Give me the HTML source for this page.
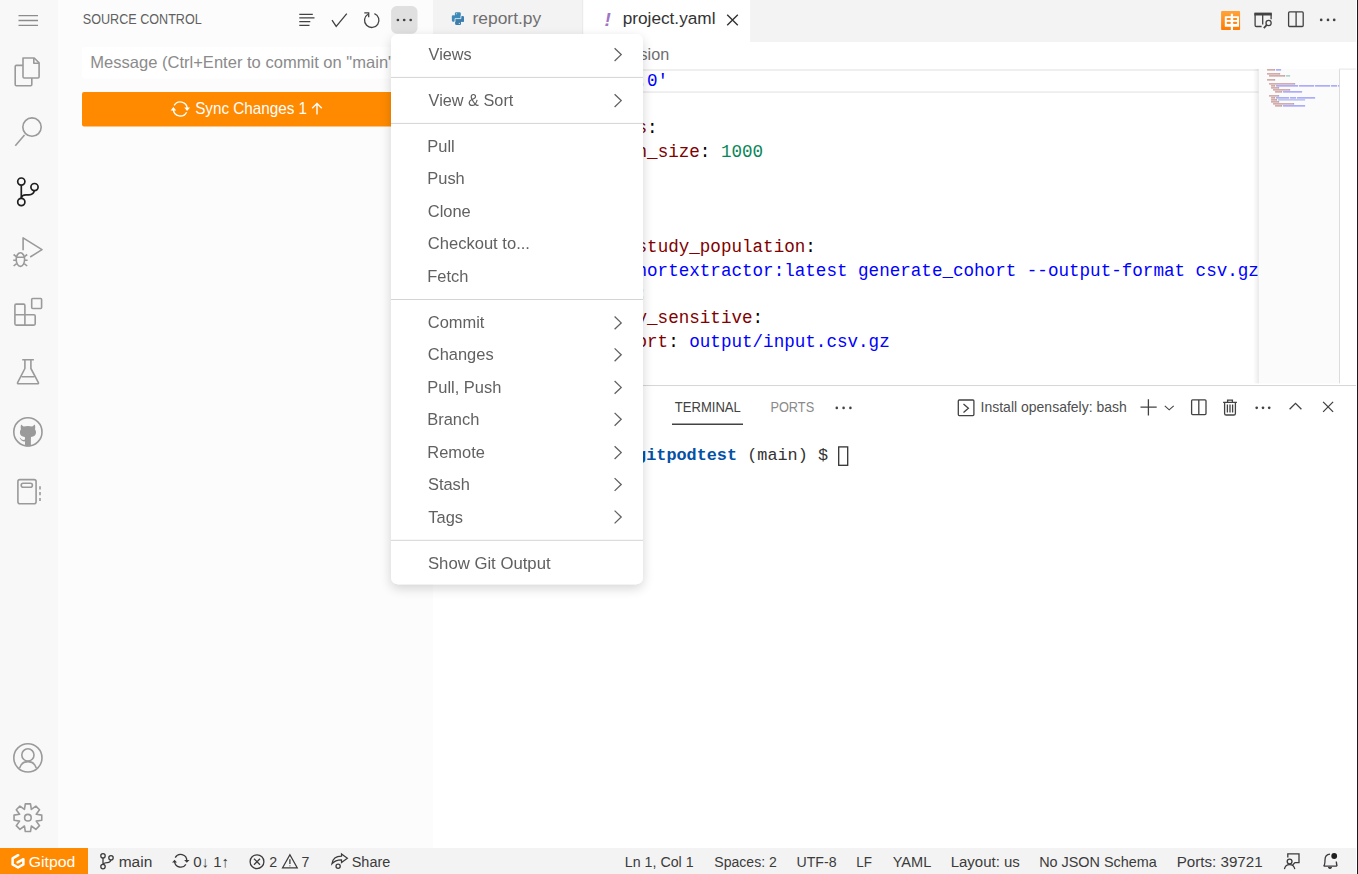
<!DOCTYPE html>
<html><head><meta charset="utf-8"><title>Source Control</title>
<style>
html,body{margin:0;padding:0;width:1358px;height:874px;overflow:hidden;background:#fff;}
svg{display:block;position:absolute;left:0;top:0;} #menu{will-change:transform;} text{white-space:pre;}
</style></head>
<body>
<svg width="1358" height="874" viewBox="0 0 1358 874" font-family='"Liberation Sans", sans-serif'>
<defs>
  
  <linearGradient id="mmsh" x1="0" x2="1" y1="0" y2="0">
    <stop offset="0" stop-color="#000" stop-opacity="0"/>
    <stop offset="1" stop-color="#000" stop-opacity="0.07"/>
  </linearGradient>
  <linearGradient id="og" x1="0" x2="0" y1="0" y2="1">
    <stop offset="0" stop-color="#ffa43a"/>
    <stop offset="1" stop-color="#ff7a00"/>
  </linearGradient>
</defs>

<!-- backgrounds -->
<rect x="0" y="0" width="1358" height="874" fill="#ffffff"/>
<rect x="0" y="0" width="58" height="848" fill="#f8f8f8"/>
<rect x="58" y="0" width="375" height="848" fill="#fcfcfc"/>
<rect x="433" y="0" width="923" height="42" fill="#f3f3f3"/>
<rect x="582.7" y="0" width="167.4" height="42" fill="#ffffff"/>
<rect x="582.2" y="0" width="1" height="41.7" fill="#e8e8e8"/>
<rect x="0" y="848" width="1356" height="26" fill="#f3f3f3"/>
<rect x="0" y="848" width="88" height="26" fill="#ff8a00"/>
<rect x="1357" y="0" width="1" height="874" fill="#1a1a1a"/>

<!-- ===== activity bar icons ===== -->
<g fill="none" stroke="#9a9a9a" stroke-width="1.6" stroke-linejoin="round">
  <!-- menu -->
  <path d="M18.5 15.6H38 M18.5 20.5H38 M18.5 25.4H38" stroke="#8c8c8c" stroke-width="1.3"/>
  <!-- files -->
  <path d="M23 58 H34.2 L39.1 62.9 V76.8 Q39.1 78 37.9 78 H24.2 Q23 78 23 76.8 Z"/>
  <path d="M33.8 58 V63.3 H39.1"/>
  <path d="M23 65.4 H16.4 Q15.2 65.4 15.2 66.6 V84.6 Q15.2 85.8 16.4 85.8 H30.6 Q31.8 85.8 31.8 84.6 V78"/>
  <!-- search -->
  <circle cx="32" cy="127.1" r="9.2"/>
  <path d="M24.5 135.1 L15.3 145.8"/>
  <!-- scm (active) -->
  <g stroke="#1f1f1f" stroke-width="1.7">
    <circle cx="21.3" cy="181.6" r="3.6"/>
    <circle cx="21.3" cy="202" r="3.6"/>
    <circle cx="34.5" cy="187.1" r="3.6"/>
    <path d="M21.3 185.2 V198.4"/>
    <path d="M34.3 190.7 Q33.6 194.8 29 194.8 H26 Q21.8 194.8 21.3 198"/>
  </g>
  <!-- debug -->
  <path d="M23.1 250.3 V237.9 L42 249.6 L30.2 257"/>
  <ellipse cx="20.4" cy="259.6" rx="4.2" ry="6.8"/>
  <path d="M16.6 257.2 H24.2 M13.6 254.5 L16.3 256.6 M27.2 254.5 L24.5 256.6 M13.2 260.2 H16 M27.6 260.2 H24.8 M13.6 266 L16.6 263.6 M27.2 266 L24.2 263.6"/>
  <!-- extensions -->
  <rect x="31.7" y="298.5" width="9.9" height="10" rx="1"/>
  <path d="M24.9 314.7 V305.4 Q24.9 304.1 23.6 304.1 H16.2 Q14.9 304.1 14.9 305.4 V323.8 Q14.9 325.1 16.2 325.1 H33.9 Q35.2 325.1 35.2 323.8 V316 Q35.2 314.7 33.9 314.7 H14.9 M24.9 314.7 V325.1"/>
  <!-- flask -->
  <path d="M22.2 359.8 H33.9 M24.9 359.8 V368.5 L17.6 382.6 Q17.2 383.8 18.4 383.8 H37.6 Q38.8 383.8 38.4 382.6 L30.9 368.5 V359.8 M21.7 376.7 H34.3"/>
  <!-- github -->
  <circle cx="27.9" cy="431.9" r="14.1"/>
  <!-- notebook -->
  <rect x="17.9" y="479.6" width="18.2" height="24.2" rx="2"/>
  <rect x="21.2" y="483.3" width="11.2" height="4" rx="2"/>
  <path d="M40 486.2 V489.4 M40 492.1 V495.3 M40 497.9 V501.1"/>
  <!-- account -->
  <circle cx="27.9" cy="757.9" r="14.1"/>
  <circle cx="27.9" cy="754.9" r="6.1"/>
  <path d="M19.6 768 Q21.5 761.6 27.9 761.6 Q34.3 761.6 36.3 768"/>
  <!-- gear -->
  <path d="M25.31,803.84 L30.49,803.84 L31.34,809.39 L35.87,806.07 L39.53,809.73 L36.21,814.26 L41.76,815.11 L41.76,820.29 L36.21,821.14 L39.53,825.67 L35.87,829.33 L31.34,826.01 L30.49,831.56 L25.31,831.56 L24.46,826.01 L19.93,829.33 L16.27,825.67 L19.59,821.14 L14.04,820.29 L14.04,815.11 L19.59,814.26 L16.27,809.73 L19.93,806.07 L24.46,809.39Z"/>
  <circle cx="27.9" cy="817.7" r="3.3"/>
</g>
<!-- github cat -->
<path fill="#9a9a9a" d="M21 424.6 L23.6 426.6 Q27.9 425.2 32.2 426.6 L34.9 424.6 Q35.6 427.6 35 429.2 Q36.2 430.8 36 432.8 Q35.6 436.6 31 437 Q30.9 437.6 30.9 439 V446 Q27.9 447 25 446 V441.2 Q21.8 442.4 19.6 437.6 L20.5 438 Q21.8 440.6 25 439.6 Q25 437.8 24.8 437 Q20.2 436.6 19.9 432.8 Q19.7 430.8 20.9 429.2 Q20.3 427.6 21 424.6 Z"/>

<!-- ===== sidebar ===== -->
<g fill="none" stroke="#424242" stroke-width="1.3" stroke-linecap="butt">
  <path d="M299.3 14.3 H312.8 M299.3 17.9 H314.5 M299.3 21.7 H310.3 M299.3 25.4 H309.5"/>
  <path d="M332 20.1 L336.2 26.3 L346.8 13.7"/>
  <path d="M374.4 13.6 A7.2 7.2 0 1 1 367.9 14.2"/>
  <path d="M364.3 12.9 H368.7 V17.3"/>
</g>
<rect x="391.1" y="6.1" width="26.4" height="27.6" rx="5.5" fill="#e0e0e0"/>
<g fill="#424242"><circle cx="397.9" cy="20" r="1.35"/><circle cx="404.2" cy="20" r="1.35"/><circle cx="410.7" cy="20" r="1.35"/></g>
<rect x="82" y="47.3" width="330" height="31.2" rx="2" fill="#ffffff"/>
<rect x="82" y="92" width="330" height="34.5" rx="2" fill="#ff8a00"/>
<g fill="none" stroke="#ffffff" stroke-width="1.4">
  <path d="M174.2 105.4 A7 7 0 0 1 187.2 108.4"/>
  <path d="M186.6 112.2 A7 7 0 0 1 173.4 109.6"/>
  <path d="M317 114.5 V103.6 M312.2 108.2 L317 103.4 L321.8 108.2"/>
</g>
<path d="M184.2 107.4 H190 L187.1 110.9 Z M170.6 110.6 H176.2 L173.4 107.1 Z" fill="#ffffff"/>
<!-- ===== tabs ===== -->
<g fill="#3f89b8">
  <rect x="454.9" y="12.2" width="5.9" height="6.6" rx="1.3"/>
  <rect x="451.9" y="15.4" width="8.9" height="3.4" rx="0.6"/>
  <rect x="451.9" y="15.4" width="3.2" height="6.4" rx="1.3"/>
</g>
<g fill="#3a7fae">
  <rect x="455.1" y="18.6" width="5.9" height="6.4" rx="1.3"/>
  <rect x="455.1" y="18.6" width="8.9" height="3.2" rx="0.6"/>
  <rect x="460.8" y="15.9" width="3.2" height="5.9" rx="1.3"/>
</g>
<path d="M460.9 15.6 V18.6 H455 V22" stroke="#f3f3f3" stroke-width="0.8" fill="none"/>
<circle cx="456.6" cy="13.8" r="0.55" fill="#f3f3f3"/><circle cx="459.3" cy="23.4" r="0.55" fill="#f3f3f3"/>
<text x="604.4" y="25.8" font-family='"Liberation Sans", sans-serif' font-size="19" font-weight="bold" font-style="italic" fill="#a074c4">!</text>
<path d="M727.2 14.8 L737.8 25.2 M737.8 14.8 L727.2 25.2" stroke="#333" stroke-width="1.4" fill="none"/>
<!-- tab bar actions -->
<rect x="1221.1" y="11.1" width="19" height="19" rx="0.8" fill="url(#og)"/>
<rect x="1224.8" y="16.2" width="14.2" height="10.6" rx="0.6" fill="#ffffff"/>
<rect x="1230.8" y="13.7" width="2.2" height="16.4" fill="#ffffff"/>
<g fill="#ff8a1a">
  <rect x="1226.6" y="18.1" width="4.2" height="1.9" rx="0.9"/>
  <rect x="1233" y="18.1" width="4.2" height="1.9" rx="0.9"/>
  <rect x="1226.6" y="21.7" width="4.2" height="2.2" rx="1"/>
  <rect x="1233" y="21.7" width="4.2" height="2.2" rx="1"/>
</g>
<g fill="none" stroke="#424242" stroke-width="1.3">
  <path d="M1271.1 19.3 V14 H1255.1 V25.3 Q1255.1 26.5 1256.3 26.5 H1261.6"/>
  <path d="M1262.7 15 V24.4"/>
  <circle cx="1268.6" cy="23" r="2.6"/>
  <path d="M1266.6 25.2 L1263.8 28.2" stroke-width="1.7"/>
  <rect x="1288.6" y="11.9" width="14.6" height="14.6" rx="1"/>
  <path d="M1296.1 12 V26.5"/>
</g>
<rect x="1254.4" y="12.6" width="17.3" height="2.9" fill="#424242"/>
<g fill="#424242"><circle cx="1321.2" cy="19.9" r="1.35"/><circle cx="1328" cy="19.9" r="1.35"/><circle cx="1334.2" cy="19.9" r="1.35"/></g>

<!-- ===== editor ===== -->
<text transform="translate(82.80 23.80) scale(0.8752 1)" font-family='"Liberation Sans", sans-serif' font-size="14.4" fill="#616161" font-weight="normal" font-style="normal">SOURCE CONTROL</text>
<text transform="translate(90.18 68.10) scale(1.0159 1)" font-family='"Liberation Sans", sans-serif' font-size="16.3" fill="#8b8b8b" font-weight="normal" font-style="normal">Message (Ctrl+Enter to commit on &quot;main&quot;)</text>
<text transform="translate(195.19 113.90) scale(0.9308 1)" font-family='"Liberation Sans", sans-serif' font-size="16.4" fill="#ffffff" font-weight="normal" font-style="normal">Sync Changes 1</text>
<text transform="translate(472.56 23.60) scale(1.0232 1)" font-family='"Liberation Sans", sans-serif' font-size="17" fill="#6f6f6f" font-weight="normal" font-style="normal">report.py</text>
<text transform="translate(622.67 23.90) scale(1.0138 1)" font-family='"Liberation Sans", sans-serif' font-size="17" fill="#333333" font-weight="normal" font-style="normal">project.yaml</text>
<text transform="translate(617.00 59.90) scale(1.0000 1)" font-family='"Liberation Sans", sans-serif' font-size="16.2" fill="#6f6f6f" font-weight="normal" font-style="normal">version</text>
<text transform="translate(674.84 412.10) scale(0.9193 1)" font-family='"Liberation Sans", sans-serif' font-size="14.2" fill="#424242" font-weight="normal" font-style="normal">TERMINAL</text>
<text transform="translate(770.38 412.10) scale(0.9000 1)" font-family='"Liberation Sans", sans-serif' font-size="14.2" fill="#8a8a8a" font-weight="normal" font-style="normal">PORTS</text>
<text transform="translate(980.54 411.70) scale(1.0154 1)" font-family='"Liberation Sans", sans-serif' font-size="13.8" fill="#4f4f4f" font-weight="normal" font-style="normal">Install opensafely: bash</text>
<text transform="translate(28.71 866.80) scale(1.0539 1)" font-family='"Liberation Sans", sans-serif' font-size="15" fill="#ffffff" font-weight="normal" font-style="normal">Gitpod</text>
<text transform="translate(118.67 866.80) scale(1.0335 1)" font-family='"Liberation Sans", sans-serif' font-size="15" fill="#3b3b3b" font-weight="normal" font-style="normal">main</text>
<text transform="translate(193.15 866.80) scale(1.0044 1)" font-family='"Liberation Sans", sans-serif' font-size="15" fill="#3b3b3b" font-weight="normal" font-style="normal">0↓ 1↑</text>
<text transform="translate(269.29 866.80) scale(0.9500 1)" font-family='"Liberation Sans", sans-serif' font-size="15" fill="#3b3b3b" font-weight="normal" font-style="normal">2</text>
<text transform="translate(301.59 866.80) scale(0.9500 1)" font-family='"Liberation Sans", sans-serif' font-size="15" fill="#3b3b3b" font-weight="normal" font-style="normal">7</text>
<text transform="translate(351.72 866.80) scale(0.9644 1)" font-family='"Liberation Sans", sans-serif' font-size="15" fill="#3b3b3b" font-weight="normal" font-style="normal">Share</text>
<text transform="translate(624.86 866.80) scale(0.9483 1)" font-family='"Liberation Sans", sans-serif' font-size="15" fill="#3b3b3b" font-weight="normal" font-style="normal">Ln 1, Col 1</text>
<text transform="translate(714.34 866.80) scale(0.9371 1)" font-family='"Liberation Sans", sans-serif' font-size="15" fill="#3b3b3b" font-weight="normal" font-style="normal">Spaces: 2</text>
<text transform="translate(796.41 866.80) scale(0.9437 1)" font-family='"Liberation Sans", sans-serif' font-size="15" fill="#3b3b3b" font-weight="normal" font-style="normal">UTF-8</text>
<text transform="translate(856.32 866.80) scale(0.8963 1)" font-family='"Liberation Sans", sans-serif' font-size="15" fill="#3b3b3b" font-weight="normal" font-style="normal">LF</text>
<text transform="translate(892.71 866.80) scale(0.9708 1)" font-family='"Liberation Sans", sans-serif' font-size="15" fill="#3b3b3b" font-weight="normal" font-style="normal">YAML</text>
<text transform="translate(950.70 866.80) scale(0.9991 1)" font-family='"Liberation Sans", sans-serif' font-size="15" fill="#3b3b3b" font-weight="normal" font-style="normal">Layout: us</text>
<text transform="translate(1039.15 866.80) scale(0.9596 1)" font-family='"Liberation Sans", sans-serif' font-size="15" fill="#3b3b3b" font-weight="normal" font-style="normal">No JSON Schema</text>
<text transform="translate(1176.69 866.80) scale(1.0113 1)" font-family='"Liberation Sans", sans-serif' font-size="15" fill="#3b3b3b" font-weight="normal" font-style="normal">Ports: 39721</text>
<rect x="433" y="69.1" width="825.7" height="1.8" fill="#eeeeee"/>
<rect x="433" y="91.2" width="825.7" height="1.8" fill="#eeeeee"/>
<g font-family='"Liberation Mono", monospace' font-size="17.58">
<text x="520.50" y="85.70" fill="#800000">version</text>
<text x="594.34" y="85.70" fill="#000000">: </text>
<text x="615.43" y="85.70" fill="#0000ff">'4.0'</text>
<text x="520.50" y="133.16" fill="#800000">expectations</text>
<text x="647.08" y="133.16" fill="#000000">:</text>
<text x="541.60" y="156.89" fill="#800000">population_size</text>
<text x="699.82" y="156.89" fill="#000000">: </text>
<text x="720.91" y="156.89" fill="#098658">1000</text>
<text x="520.50" y="204.35" fill="#800000">actions</text>
<text x="594.34" y="204.35" fill="#000000">:</text>
<text x="541.60" y="251.81" fill="#800000">generate_study_population</text>
<text x="805.30" y="251.81" fill="#000000">:</text>
<text x="562.69" y="275.54" fill="#800000">run</text>
<text x="594.34" y="275.54" fill="#000000">: </text>
<text x="615.43" y="275.54" fill="#0000ff">cohortextractor:latest generate_cohort --output-format csv.gz</text>
<text x="562.69" y="299.27" fill="#800000">outputs</text>
<text x="636.53" y="299.27" fill="#2f7fd6">:</text>
<text x="583.79" y="323.00" fill="#800000">highly_sensitive</text>
<text x="752.56" y="323.00" fill="#000000">:</text>
<text x="604.88" y="346.73" fill="#800000">cohort</text>
<text x="668.17" y="346.73" fill="#000000">: </text>
<text x="689.27" y="346.73" fill="#0000ff">output/input.csv.gz</text>
</g>
<!-- minimap -->
<rect x="1253" y="68.9" width="5.7" height="314.5" fill="url(#mmsh)"/>
<rect x="1258.7" y="68.9" width="80.6" height="314.5" fill="#fbfbfb"/>
<rect x="1257.8" y="68.9" width="1" height="314.5" fill="#000" opacity="0.045"/>
<rect x="1339" y="68.9" width="1" height="314.5" fill="#dcdcdc"/>
<rect x="1339" y="68.6" width="17" height="1" fill="#e6e6e6"/>
<g opacity="0.42"><rect x="1267.2" y="69.1" width="0.9" height="1.5" fill="#800000"/><rect x="1268.2" y="69.1" width="0.9" height="1.5" fill="#800000"/><rect x="1269.2" y="69.1" width="0.9" height="1.5" fill="#800000"/><rect x="1270.2" y="69.1" width="0.9" height="1.5" fill="#800000"/><rect x="1271.2" y="69.1" width="0.9" height="1.5" fill="#800000"/><rect x="1272.2" y="69.1" width="0.9" height="1.5" fill="#800000"/><rect x="1273.2" y="69.1" width="0.9" height="1.5" fill="#800000"/><rect x="1274.2" y="69.1" width="0.9" height="1.5" fill="#000000"/><rect x="1276.2" y="69.1" width="0.9" height="1.5" fill="#0000ff"/><rect x="1277.2" y="69.1" width="0.9" height="1.5" fill="#0000ff"/><rect x="1278.2" y="69.1" width="0.9" height="1.5" fill="#0000ff"/><rect x="1279.2" y="69.1" width="0.9" height="1.5" fill="#0000ff"/><rect x="1280.2" y="69.1" width="0.9" height="1.5" fill="#0000ff"/><rect x="1267.2" y="73.1" width="0.9" height="1.5" fill="#800000"/><rect x="1268.2" y="73.1" width="0.9" height="1.5" fill="#800000"/><rect x="1269.2" y="73.1" width="0.9" height="1.5" fill="#800000"/><rect x="1270.2" y="73.1" width="0.9" height="1.5" fill="#800000"/><rect x="1271.2" y="73.1" width="0.9" height="1.5" fill="#800000"/><rect x="1272.2" y="73.1" width="0.9" height="1.5" fill="#800000"/><rect x="1273.2" y="73.1" width="0.9" height="1.5" fill="#800000"/><rect x="1274.2" y="73.1" width="0.9" height="1.5" fill="#800000"/><rect x="1275.2" y="73.1" width="0.9" height="1.5" fill="#800000"/><rect x="1276.2" y="73.1" width="0.9" height="1.5" fill="#800000"/><rect x="1277.2" y="73.1" width="0.9" height="1.5" fill="#800000"/><rect x="1278.2" y="73.1" width="0.9" height="1.5" fill="#800000"/><rect x="1279.2" y="73.1" width="0.9" height="1.5" fill="#000000"/><rect x="1269.2" y="75.1" width="0.9" height="1.5" fill="#800000"/><rect x="1270.2" y="75.1" width="0.9" height="1.5" fill="#800000"/><rect x="1271.2" y="75.1" width="0.9" height="1.5" fill="#800000"/><rect x="1272.2" y="75.1" width="0.9" height="1.5" fill="#800000"/><rect x="1273.2" y="75.1" width="0.9" height="1.5" fill="#800000"/><rect x="1274.2" y="75.1" width="0.9" height="1.5" fill="#800000"/><rect x="1275.2" y="75.1" width="0.9" height="1.5" fill="#800000"/><rect x="1276.2" y="75.1" width="0.9" height="1.5" fill="#800000"/><rect x="1277.2" y="75.1" width="0.9" height="1.5" fill="#800000"/><rect x="1278.2" y="75.1" width="0.9" height="1.5" fill="#800000"/><rect x="1279.2" y="75.1" width="0.9" height="1.5" fill="#800000"/><rect x="1280.2" y="75.1" width="0.9" height="1.5" fill="#800000"/><rect x="1281.2" y="75.1" width="0.9" height="1.5" fill="#800000"/><rect x="1282.2" y="75.1" width="0.9" height="1.5" fill="#800000"/><rect x="1283.2" y="75.1" width="0.9" height="1.5" fill="#800000"/><rect x="1284.2" y="75.1" width="0.9" height="1.5" fill="#000000"/><rect x="1286.2" y="75.1" width="0.9" height="1.5" fill="#098658"/><rect x="1287.2" y="75.1" width="0.9" height="1.5" fill="#098658"/><rect x="1288.2" y="75.1" width="0.9" height="1.5" fill="#098658"/><rect x="1289.2" y="75.1" width="0.9" height="1.5" fill="#098658"/><rect x="1267.2" y="79.1" width="0.9" height="1.5" fill="#800000"/><rect x="1268.2" y="79.1" width="0.9" height="1.5" fill="#800000"/><rect x="1269.2" y="79.1" width="0.9" height="1.5" fill="#800000"/><rect x="1270.2" y="79.1" width="0.9" height="1.5" fill="#800000"/><rect x="1271.2" y="79.1" width="0.9" height="1.5" fill="#800000"/><rect x="1272.2" y="79.1" width="0.9" height="1.5" fill="#800000"/><rect x="1273.2" y="79.1" width="0.9" height="1.5" fill="#800000"/><rect x="1274.2" y="79.1" width="0.9" height="1.5" fill="#000000"/><rect x="1269.2" y="83.1" width="0.9" height="1.5" fill="#800000"/><rect x="1270.2" y="83.1" width="0.9" height="1.5" fill="#800000"/><rect x="1271.2" y="83.1" width="0.9" height="1.5" fill="#800000"/><rect x="1272.2" y="83.1" width="0.9" height="1.5" fill="#800000"/><rect x="1273.2" y="83.1" width="0.9" height="1.5" fill="#800000"/><rect x="1274.2" y="83.1" width="0.9" height="1.5" fill="#800000"/><rect x="1275.2" y="83.1" width="0.9" height="1.5" fill="#800000"/><rect x="1276.2" y="83.1" width="0.9" height="1.5" fill="#800000"/><rect x="1277.2" y="83.1" width="0.9" height="1.5" fill="#800000"/><rect x="1278.2" y="83.1" width="0.9" height="1.5" fill="#800000"/><rect x="1279.2" y="83.1" width="0.9" height="1.5" fill="#800000"/><rect x="1280.2" y="83.1" width="0.9" height="1.5" fill="#800000"/><rect x="1281.2" y="83.1" width="0.9" height="1.5" fill="#800000"/><rect x="1282.2" y="83.1" width="0.9" height="1.5" fill="#800000"/><rect x="1283.2" y="83.1" width="0.9" height="1.5" fill="#800000"/><rect x="1284.2" y="83.1" width="0.9" height="1.5" fill="#800000"/><rect x="1285.2" y="83.1" width="0.9" height="1.5" fill="#800000"/><rect x="1286.2" y="83.1" width="0.9" height="1.5" fill="#800000"/><rect x="1287.2" y="83.1" width="0.9" height="1.5" fill="#800000"/><rect x="1288.2" y="83.1" width="0.9" height="1.5" fill="#800000"/><rect x="1289.2" y="83.1" width="0.9" height="1.5" fill="#800000"/><rect x="1290.2" y="83.1" width="0.9" height="1.5" fill="#800000"/><rect x="1291.2" y="83.1" width="0.9" height="1.5" fill="#800000"/><rect x="1292.2" y="83.1" width="0.9" height="1.5" fill="#800000"/><rect x="1293.2" y="83.1" width="0.9" height="1.5" fill="#800000"/><rect x="1294.2" y="83.1" width="0.9" height="1.5" fill="#000000"/><rect x="1271.2" y="85.1" width="0.9" height="1.5" fill="#800000"/><rect x="1272.2" y="85.1" width="0.9" height="1.5" fill="#800000"/><rect x="1273.2" y="85.1" width="0.9" height="1.5" fill="#800000"/><rect x="1274.2" y="85.1" width="0.9" height="1.5" fill="#000000"/><rect x="1276.2" y="85.1" width="0.9" height="1.5" fill="#0000ff"/><rect x="1277.2" y="85.1" width="0.9" height="1.5" fill="#0000ff"/><rect x="1278.2" y="85.1" width="0.9" height="1.5" fill="#0000ff"/><rect x="1279.2" y="85.1" width="0.9" height="1.5" fill="#0000ff"/><rect x="1280.2" y="85.1" width="0.9" height="1.5" fill="#0000ff"/><rect x="1281.2" y="85.1" width="0.9" height="1.5" fill="#0000ff"/><rect x="1282.2" y="85.1" width="0.9" height="1.5" fill="#0000ff"/><rect x="1283.2" y="85.1" width="0.9" height="1.5" fill="#0000ff"/><rect x="1284.2" y="85.1" width="0.9" height="1.5" fill="#0000ff"/><rect x="1285.2" y="85.1" width="0.9" height="1.5" fill="#0000ff"/><rect x="1286.2" y="85.1" width="0.9" height="1.5" fill="#0000ff"/><rect x="1287.2" y="85.1" width="0.9" height="1.5" fill="#0000ff"/><rect x="1288.2" y="85.1" width="0.9" height="1.5" fill="#0000ff"/><rect x="1289.2" y="85.1" width="0.9" height="1.5" fill="#0000ff"/><rect x="1290.2" y="85.1" width="0.9" height="1.5" fill="#0000ff"/><rect x="1291.2" y="85.1" width="0.9" height="1.5" fill="#0000ff"/><rect x="1292.2" y="85.1" width="0.9" height="1.5" fill="#0000ff"/><rect x="1293.2" y="85.1" width="0.9" height="1.5" fill="#0000ff"/><rect x="1294.2" y="85.1" width="0.9" height="1.5" fill="#0000ff"/><rect x="1295.2" y="85.1" width="0.9" height="1.5" fill="#0000ff"/><rect x="1296.2" y="85.1" width="0.9" height="1.5" fill="#0000ff"/><rect x="1297.2" y="85.1" width="0.9" height="1.5" fill="#0000ff"/><rect x="1299.2" y="85.1" width="0.9" height="1.5" fill="#0000ff"/><rect x="1300.2" y="85.1" width="0.9" height="1.5" fill="#0000ff"/><rect x="1301.2" y="85.1" width="0.9" height="1.5" fill="#0000ff"/><rect x="1302.2" y="85.1" width="0.9" height="1.5" fill="#0000ff"/><rect x="1303.2" y="85.1" width="0.9" height="1.5" fill="#0000ff"/><rect x="1304.2" y="85.1" width="0.9" height="1.5" fill="#0000ff"/><rect x="1305.2" y="85.1" width="0.9" height="1.5" fill="#0000ff"/><rect x="1306.2" y="85.1" width="0.9" height="1.5" fill="#0000ff"/><rect x="1307.2" y="85.1" width="0.9" height="1.5" fill="#0000ff"/><rect x="1308.2" y="85.1" width="0.9" height="1.5" fill="#0000ff"/><rect x="1309.2" y="85.1" width="0.9" height="1.5" fill="#0000ff"/><rect x="1310.2" y="85.1" width="0.9" height="1.5" fill="#0000ff"/><rect x="1311.2" y="85.1" width="0.9" height="1.5" fill="#0000ff"/><rect x="1312.2" y="85.1" width="0.9" height="1.5" fill="#0000ff"/><rect x="1313.2" y="85.1" width="0.9" height="1.5" fill="#0000ff"/><rect x="1315.2" y="85.1" width="0.9" height="1.5" fill="#0000ff"/><rect x="1316.2" y="85.1" width="0.9" height="1.5" fill="#0000ff"/><rect x="1317.2" y="85.1" width="0.9" height="1.5" fill="#0000ff"/><rect x="1318.2" y="85.1" width="0.9" height="1.5" fill="#0000ff"/><rect x="1319.2" y="85.1" width="0.9" height="1.5" fill="#0000ff"/><rect x="1320.2" y="85.1" width="0.9" height="1.5" fill="#0000ff"/><rect x="1321.2" y="85.1" width="0.9" height="1.5" fill="#0000ff"/><rect x="1322.2" y="85.1" width="0.9" height="1.5" fill="#0000ff"/><rect x="1323.2" y="85.1" width="0.9" height="1.5" fill="#0000ff"/><rect x="1324.2" y="85.1" width="0.9" height="1.5" fill="#0000ff"/><rect x="1325.2" y="85.1" width="0.9" height="1.5" fill="#0000ff"/><rect x="1326.2" y="85.1" width="0.9" height="1.5" fill="#0000ff"/><rect x="1327.2" y="85.1" width="0.9" height="1.5" fill="#0000ff"/><rect x="1328.2" y="85.1" width="0.9" height="1.5" fill="#0000ff"/><rect x="1329.2" y="85.1" width="0.9" height="1.5" fill="#0000ff"/><rect x="1331.2" y="85.1" width="0.9" height="1.5" fill="#0000ff"/><rect x="1332.2" y="85.1" width="0.9" height="1.5" fill="#0000ff"/><rect x="1333.2" y="85.1" width="0.9" height="1.5" fill="#0000ff"/><rect x="1334.2" y="85.1" width="0.9" height="1.5" fill="#0000ff"/><rect x="1335.2" y="85.1" width="0.9" height="1.5" fill="#0000ff"/><rect x="1336.2" y="85.1" width="0.9" height="1.5" fill="#0000ff"/><rect x="1338.2" y="85.1" width="0.9" height="1.5" fill="#0000ff"/><rect x="1271.2" y="87.1" width="0.9" height="1.5" fill="#800000"/><rect x="1272.2" y="87.1" width="0.9" height="1.5" fill="#800000"/><rect x="1273.2" y="87.1" width="0.9" height="1.5" fill="#800000"/><rect x="1274.2" y="87.1" width="0.9" height="1.5" fill="#800000"/><rect x="1275.2" y="87.1" width="0.9" height="1.5" fill="#800000"/><rect x="1276.2" y="87.1" width="0.9" height="1.5" fill="#800000"/><rect x="1277.2" y="87.1" width="0.9" height="1.5" fill="#800000"/><rect x="1278.2" y="87.1" width="0.9" height="1.5" fill="#000000"/><rect x="1273.2" y="89.1" width="0.9" height="1.5" fill="#800000"/><rect x="1274.2" y="89.1" width="0.9" height="1.5" fill="#800000"/><rect x="1275.2" y="89.1" width="0.9" height="1.5" fill="#800000"/><rect x="1276.2" y="89.1" width="0.9" height="1.5" fill="#800000"/><rect x="1277.2" y="89.1" width="0.9" height="1.5" fill="#800000"/><rect x="1278.2" y="89.1" width="0.9" height="1.5" fill="#800000"/><rect x="1279.2" y="89.1" width="0.9" height="1.5" fill="#800000"/><rect x="1280.2" y="89.1" width="0.9" height="1.5" fill="#800000"/><rect x="1281.2" y="89.1" width="0.9" height="1.5" fill="#800000"/><rect x="1282.2" y="89.1" width="0.9" height="1.5" fill="#800000"/><rect x="1283.2" y="89.1" width="0.9" height="1.5" fill="#800000"/><rect x="1284.2" y="89.1" width="0.9" height="1.5" fill="#800000"/><rect x="1285.2" y="89.1" width="0.9" height="1.5" fill="#800000"/><rect x="1286.2" y="89.1" width="0.9" height="1.5" fill="#800000"/><rect x="1287.2" y="89.1" width="0.9" height="1.5" fill="#800000"/><rect x="1288.2" y="89.1" width="0.9" height="1.5" fill="#800000"/><rect x="1289.2" y="89.1" width="0.9" height="1.5" fill="#000000"/><rect x="1275.2" y="91.1" width="0.9" height="1.5" fill="#800000"/><rect x="1276.2" y="91.1" width="0.9" height="1.5" fill="#800000"/><rect x="1277.2" y="91.1" width="0.9" height="1.5" fill="#800000"/><rect x="1278.2" y="91.1" width="0.9" height="1.5" fill="#800000"/><rect x="1279.2" y="91.1" width="0.9" height="1.5" fill="#800000"/><rect x="1280.2" y="91.1" width="0.9" height="1.5" fill="#800000"/><rect x="1281.2" y="91.1" width="0.9" height="1.5" fill="#000000"/><rect x="1283.2" y="91.1" width="0.9" height="1.5" fill="#0000ff"/><rect x="1284.2" y="91.1" width="0.9" height="1.5" fill="#0000ff"/><rect x="1285.2" y="91.1" width="0.9" height="1.5" fill="#0000ff"/><rect x="1286.2" y="91.1" width="0.9" height="1.5" fill="#0000ff"/><rect x="1287.2" y="91.1" width="0.9" height="1.5" fill="#0000ff"/><rect x="1288.2" y="91.1" width="0.9" height="1.5" fill="#0000ff"/><rect x="1289.2" y="91.1" width="0.9" height="1.5" fill="#0000ff"/><rect x="1290.2" y="91.1" width="0.9" height="1.5" fill="#0000ff"/><rect x="1291.2" y="91.1" width="0.9" height="1.5" fill="#0000ff"/><rect x="1292.2" y="91.1" width="0.9" height="1.5" fill="#0000ff"/><rect x="1293.2" y="91.1" width="0.9" height="1.5" fill="#0000ff"/><rect x="1294.2" y="91.1" width="0.9" height="1.5" fill="#0000ff"/><rect x="1295.2" y="91.1" width="0.9" height="1.5" fill="#0000ff"/><rect x="1296.2" y="91.1" width="0.9" height="1.5" fill="#0000ff"/><rect x="1297.2" y="91.1" width="0.9" height="1.5" fill="#0000ff"/><rect x="1298.2" y="91.1" width="0.9" height="1.5" fill="#0000ff"/><rect x="1299.2" y="91.1" width="0.9" height="1.5" fill="#0000ff"/><rect x="1300.2" y="91.1" width="0.9" height="1.5" fill="#0000ff"/><rect x="1301.2" y="91.1" width="0.9" height="1.5" fill="#0000ff"/><rect x="1269.2" y="95.1" width="0.9" height="1.5" fill="#800000"/><rect x="1270.2" y="95.1" width="0.9" height="1.5" fill="#800000"/><rect x="1271.2" y="95.1" width="0.9" height="1.5" fill="#800000"/><rect x="1272.2" y="95.1" width="0.9" height="1.5" fill="#800000"/><rect x="1273.2" y="95.1" width="0.9" height="1.5" fill="#800000"/><rect x="1274.2" y="95.1" width="0.9" height="1.5" fill="#800000"/><rect x="1275.2" y="95.1" width="0.9" height="1.5" fill="#800000"/><rect x="1276.2" y="95.1" width="0.9" height="1.5" fill="#800000"/><rect x="1277.2" y="95.1" width="0.9" height="1.5" fill="#800000"/><rect x="1278.2" y="95.1" width="0.9" height="1.5" fill="#000000"/><rect x="1271.2" y="97.1" width="0.9" height="1.5" fill="#800000"/><rect x="1272.2" y="97.1" width="0.9" height="1.5" fill="#800000"/><rect x="1273.2" y="97.1" width="0.9" height="1.5" fill="#800000"/><rect x="1274.2" y="97.1" width="0.9" height="1.5" fill="#000000"/><rect x="1276.2" y="97.1" width="0.9" height="1.5" fill="#0000ff"/><rect x="1277.2" y="97.1" width="0.9" height="1.5" fill="#0000ff"/><rect x="1278.2" y="97.1" width="0.9" height="1.5" fill="#0000ff"/><rect x="1279.2" y="97.1" width="0.9" height="1.5" fill="#0000ff"/><rect x="1280.2" y="97.1" width="0.9" height="1.5" fill="#0000ff"/><rect x="1281.2" y="97.1" width="0.9" height="1.5" fill="#0000ff"/><rect x="1282.2" y="97.1" width="0.9" height="1.5" fill="#0000ff"/><rect x="1283.2" y="97.1" width="0.9" height="1.5" fill="#0000ff"/><rect x="1284.2" y="97.1" width="0.9" height="1.5" fill="#0000ff"/><rect x="1285.2" y="97.1" width="0.9" height="1.5" fill="#0000ff"/><rect x="1286.2" y="97.1" width="0.9" height="1.5" fill="#0000ff"/><rect x="1287.2" y="97.1" width="0.9" height="1.5" fill="#0000ff"/><rect x="1288.2" y="97.1" width="0.9" height="1.5" fill="#0000ff"/><rect x="1290.2" y="97.1" width="0.9" height="1.5" fill="#0000ff"/><rect x="1291.2" y="97.1" width="0.9" height="1.5" fill="#0000ff"/><rect x="1292.2" y="97.1" width="0.9" height="1.5" fill="#0000ff"/><rect x="1293.2" y="97.1" width="0.9" height="1.5" fill="#0000ff"/><rect x="1294.2" y="97.1" width="0.9" height="1.5" fill="#0000ff"/><rect x="1295.2" y="97.1" width="0.9" height="1.5" fill="#0000ff"/><rect x="1297.2" y="97.1" width="0.9" height="1.5" fill="#0000ff"/><rect x="1298.2" y="97.1" width="0.9" height="1.5" fill="#0000ff"/><rect x="1299.2" y="97.1" width="0.9" height="1.5" fill="#0000ff"/><rect x="1300.2" y="97.1" width="0.9" height="1.5" fill="#0000ff"/><rect x="1301.2" y="97.1" width="0.9" height="1.5" fill="#0000ff"/><rect x="1302.2" y="97.1" width="0.9" height="1.5" fill="#0000ff"/><rect x="1303.2" y="97.1" width="0.9" height="1.5" fill="#0000ff"/><rect x="1304.2" y="97.1" width="0.9" height="1.5" fill="#0000ff"/><rect x="1305.2" y="97.1" width="0.9" height="1.5" fill="#0000ff"/><rect x="1306.2" y="97.1" width="0.9" height="1.5" fill="#0000ff"/><rect x="1307.2" y="97.1" width="0.9" height="1.5" fill="#0000ff"/><rect x="1308.2" y="97.1" width="0.9" height="1.5" fill="#0000ff"/><rect x="1309.2" y="97.1" width="0.9" height="1.5" fill="#0000ff"/><rect x="1310.2" y="97.1" width="0.9" height="1.5" fill="#0000ff"/><rect x="1311.2" y="97.1" width="0.9" height="1.5" fill="#0000ff"/><rect x="1312.2" y="97.1" width="0.9" height="1.5" fill="#0000ff"/><rect x="1313.2" y="97.1" width="0.9" height="1.5" fill="#0000ff"/><rect x="1314.2" y="97.1" width="0.9" height="1.5" fill="#0000ff"/><rect x="1271.2" y="99.1" width="0.9" height="1.5" fill="#800000"/><rect x="1272.2" y="99.1" width="0.9" height="1.5" fill="#800000"/><rect x="1273.2" y="99.1" width="0.9" height="1.5" fill="#800000"/><rect x="1274.2" y="99.1" width="0.9" height="1.5" fill="#800000"/><rect x="1275.2" y="99.1" width="0.9" height="1.5" fill="#800000"/><rect x="1276.2" y="99.1" width="0.9" height="1.5" fill="#000000"/><rect x="1278.2" y="99.1" width="0.9" height="1.5" fill="#3a5bd0"/><rect x="1279.2" y="99.1" width="0.9" height="1.5" fill="#3a5bd0"/><rect x="1280.2" y="99.1" width="0.9" height="1.5" fill="#3a5bd0"/><rect x="1281.2" y="99.1" width="0.9" height="1.5" fill="#3a5bd0"/><rect x="1282.2" y="99.1" width="0.9" height="1.5" fill="#3a5bd0"/><rect x="1283.2" y="99.1" width="0.9" height="1.5" fill="#3a5bd0"/><rect x="1284.2" y="99.1" width="0.9" height="1.5" fill="#3a5bd0"/><rect x="1285.2" y="99.1" width="0.9" height="1.5" fill="#3a5bd0"/><rect x="1286.2" y="99.1" width="0.9" height="1.5" fill="#3a5bd0"/><rect x="1287.2" y="99.1" width="0.9" height="1.5" fill="#3a5bd0"/><rect x="1288.2" y="99.1" width="0.9" height="1.5" fill="#3a5bd0"/><rect x="1289.2" y="99.1" width="0.9" height="1.5" fill="#3a5bd0"/><rect x="1290.2" y="99.1" width="0.9" height="1.5" fill="#3a5bd0"/><rect x="1291.2" y="99.1" width="0.9" height="1.5" fill="#3a5bd0"/><rect x="1292.2" y="99.1" width="0.9" height="1.5" fill="#3a5bd0"/><rect x="1293.2" y="99.1" width="0.9" height="1.5" fill="#3a5bd0"/><rect x="1294.2" y="99.1" width="0.9" height="1.5" fill="#3a5bd0"/><rect x="1295.2" y="99.1" width="0.9" height="1.5" fill="#3a5bd0"/><rect x="1296.2" y="99.1" width="0.9" height="1.5" fill="#3a5bd0"/><rect x="1297.2" y="99.1" width="0.9" height="1.5" fill="#3a5bd0"/><rect x="1298.2" y="99.1" width="0.9" height="1.5" fill="#3a5bd0"/><rect x="1299.2" y="99.1" width="0.9" height="1.5" fill="#3a5bd0"/><rect x="1300.2" y="99.1" width="0.9" height="1.5" fill="#3a5bd0"/><rect x="1301.2" y="99.1" width="0.9" height="1.5" fill="#3a5bd0"/><rect x="1302.2" y="99.1" width="0.9" height="1.5" fill="#3a5bd0"/><rect x="1303.2" y="99.1" width="0.9" height="1.5" fill="#3a5bd0"/><rect x="1304.2" y="99.1" width="0.9" height="1.5" fill="#3a5bd0"/><rect x="1271.2" y="101.1" width="0.9" height="1.5" fill="#800000"/><rect x="1272.2" y="101.1" width="0.9" height="1.5" fill="#800000"/><rect x="1273.2" y="101.1" width="0.9" height="1.5" fill="#800000"/><rect x="1274.2" y="101.1" width="0.9" height="1.5" fill="#800000"/><rect x="1275.2" y="101.1" width="0.9" height="1.5" fill="#800000"/><rect x="1276.2" y="101.1" width="0.9" height="1.5" fill="#800000"/><rect x="1277.2" y="101.1" width="0.9" height="1.5" fill="#800000"/><rect x="1278.2" y="101.1" width="0.9" height="1.5" fill="#000000"/><rect x="1273.2" y="103.1" width="0.9" height="1.5" fill="#800000"/><rect x="1274.2" y="103.1" width="0.9" height="1.5" fill="#800000"/><rect x="1275.2" y="103.1" width="0.9" height="1.5" fill="#800000"/><rect x="1276.2" y="103.1" width="0.9" height="1.5" fill="#800000"/><rect x="1277.2" y="103.1" width="0.9" height="1.5" fill="#800000"/><rect x="1278.2" y="103.1" width="0.9" height="1.5" fill="#800000"/><rect x="1279.2" y="103.1" width="0.9" height="1.5" fill="#800000"/><rect x="1280.2" y="103.1" width="0.9" height="1.5" fill="#800000"/><rect x="1281.2" y="103.1" width="0.9" height="1.5" fill="#800000"/><rect x="1282.2" y="103.1" width="0.9" height="1.5" fill="#800000"/><rect x="1283.2" y="103.1" width="0.9" height="1.5" fill="#800000"/><rect x="1284.2" y="103.1" width="0.9" height="1.5" fill="#800000"/><rect x="1285.2" y="103.1" width="0.9" height="1.5" fill="#800000"/><rect x="1286.2" y="103.1" width="0.9" height="1.5" fill="#800000"/><rect x="1287.2" y="103.1" width="0.9" height="1.5" fill="#800000"/><rect x="1288.2" y="103.1" width="0.9" height="1.5" fill="#800000"/><rect x="1289.2" y="103.1" width="0.9" height="1.5" fill="#800000"/><rect x="1290.2" y="103.1" width="0.9" height="1.5" fill="#800000"/><rect x="1291.2" y="103.1" width="0.9" height="1.5" fill="#800000"/><rect x="1292.2" y="103.1" width="0.9" height="1.5" fill="#800000"/><rect x="1293.2" y="103.1" width="0.9" height="1.5" fill="#000000"/><rect x="1275.2" y="105.1" width="0.9" height="1.5" fill="#800000"/><rect x="1276.2" y="105.1" width="0.9" height="1.5" fill="#800000"/><rect x="1277.2" y="105.1" width="0.9" height="1.5" fill="#800000"/><rect x="1278.2" y="105.1" width="0.9" height="1.5" fill="#800000"/><rect x="1279.2" y="105.1" width="0.9" height="1.5" fill="#800000"/><rect x="1280.2" y="105.1" width="0.9" height="1.5" fill="#800000"/><rect x="1281.2" y="105.1" width="0.9" height="1.5" fill="#000000"/><rect x="1283.2" y="105.1" width="0.9" height="1.5" fill="#0000ff"/><rect x="1284.2" y="105.1" width="0.9" height="1.5" fill="#0000ff"/><rect x="1285.2" y="105.1" width="0.9" height="1.5" fill="#0000ff"/><rect x="1286.2" y="105.1" width="0.9" height="1.5" fill="#0000ff"/><rect x="1287.2" y="105.1" width="0.9" height="1.5" fill="#0000ff"/><rect x="1288.2" y="105.1" width="0.9" height="1.5" fill="#0000ff"/><rect x="1289.2" y="105.1" width="0.9" height="1.5" fill="#0000ff"/><rect x="1290.2" y="105.1" width="0.9" height="1.5" fill="#0000ff"/><rect x="1291.2" y="105.1" width="0.9" height="1.5" fill="#0000ff"/><rect x="1292.2" y="105.1" width="0.9" height="1.5" fill="#0000ff"/><rect x="1293.2" y="105.1" width="0.9" height="1.5" fill="#0000ff"/><rect x="1294.2" y="105.1" width="0.9" height="1.5" fill="#0000ff"/><rect x="1295.2" y="105.1" width="0.9" height="1.5" fill="#0000ff"/><rect x="1296.2" y="105.1" width="0.9" height="1.5" fill="#0000ff"/><rect x="1297.2" y="105.1" width="0.9" height="1.5" fill="#0000ff"/><rect x="1298.2" y="105.1" width="0.9" height="1.5" fill="#0000ff"/><rect x="1299.2" y="105.1" width="0.9" height="1.5" fill="#0000ff"/><rect x="1300.2" y="105.1" width="0.9" height="1.5" fill="#0000ff"/><rect x="1301.2" y="105.1" width="0.9" height="1.5" fill="#0000ff"/><rect x="1302.2" y="105.1" width="0.9" height="1.5" fill="#0000ff"/><rect x="1303.2" y="105.1" width="0.9" height="1.5" fill="#0000ff"/><rect x="1304.2" y="105.1" width="0.9" height="1.5" fill="#0000ff"/></g>

<!-- ===== panel ===== -->
<rect x="433" y="385" width="923" height="1" fill="#d6d6d6"/>
<rect x="672" y="423.5" width="71" height="1.5" fill="#424242"/>
<g fill="#424242"><circle cx="836.8" cy="407.9" r="1.3"/><circle cx="843.6" cy="407.9" r="1.3"/><circle cx="850.4" cy="407.9" r="1.3"/></g>
<g fill="none" stroke="#424242" stroke-width="1.3">
  <rect x="958.3" y="400" width="15.6" height="15.6" rx="1"/>
  <path d="M963.5 404.1 L968.4 408.3 L963.5 412.6"/>
  <path d="M1140.5 407.2 H1156.7 M1148.4 399.3 V415.5"/>
  <path d="M1164.8 405.8 L1169.2 409.8 L1173.7 405.8" stroke-width="1.1"/>
  <rect x="1191.6" y="399.8" width="14.4" height="14.8" rx="1"/>
  <path d="M1198.8 400 V414.8"/>
  <path d="M1223.1 402.4 H1236.9 M1227.6 402.4 V400.1 H1232.4 V402.4 M1224.6 402.4 V413.4 Q1224.6 415 1226.2 415 H1233.8 Q1235.4 415 1235.4 413.4 V402.4 M1227.4 404.6 V412.6 M1230 404.6 V412.6 M1232.6 404.6 V412.6"/>
  <path d="M1289.6 409.3 L1295.5 403.4 L1301.4 409.3"/>
  <path d="M1323.1 401.9 L1333.1 411.9 M1333.1 401.9 L1323.1 411.9"/>
</g>
<g fill="#424242"><circle cx="1256.7" cy="407.8" r="1.35"/><circle cx="1263" cy="407.8" r="1.35"/><circle cx="1269.2" cy="407.8" r="1.35"/></g>
<g font-family='"Liberation Mono", monospace' font-size="16.83">
<text x="454.30" y="460.3" fill="#00a000" font-weight="bold">gitpod</text>
<text x="525.00" y="460.3" fill="#0451a5" font-weight="bold">/workspace/gitpodtest</text>
<text x="737.10" y="460.3" fill="#333333" font-weight="normal"> (main) $ </text>
</g>
<rect x="838.7" y="446.9" width="9" height="18.4" fill="none" stroke="#333" stroke-width="1.3"/>

<!-- ===== status bar icons ===== -->
<g fill="none" stroke="#ffffff" stroke-width="2.5" stroke-linejoin="round" stroke-linecap="round">
  <path d="M18.2 855.2 L12.6 858.4 V864.4 L18 867.5 L23.4 864.4 V859.2 L17.6 862.3"/>
</g>
<g fill="none" stroke="#3b3b3b" stroke-width="1.3">
  <circle cx="103" cy="855.8" r="2.2"/>
  <circle cx="103" cy="866.6" r="2.2"/>
  <circle cx="111" cy="857.8" r="2.2"/>
  <path d="M103 858 V864.4 M110.8 860 Q110.4 862.6 107.4 862.6 Q103.6 862.6 103.2 864.6"/>
  <path d="M175.2 857.6 A6.2 6.2 0 0 1 186.8 860.6"/>
  <path d="M185.9 864.4 A6.2 6.2 0 0 1 174.6 861.8"/>
  <circle cx="257" cy="861.7" r="6.9"/>
  <path d="M254 858.7 L260 864.7 M260 858.7 L254 864.7"/>
  <path d="M289.9 854.8 L297.2 867.8 H282.6 Z"/>
  <path d="M289.9 859.2 V864"/>
  <path d="M331.9 863.8 C332.6 859 336 856.2 341.5 856.2 V853.9 L347.4 858.3 L341.5 862.6 V859.8 C337.2 859.8 334.2 861 331.9 863.8 Z" stroke-width="1.2"/>
  <circle cx="338.1" cy="866.2" r="2.1"/>
  <!-- live share / account on right -->
  <path d="M1287.8 857.6 V853.8 H1299 V862.6 L1295 862.6 L1292.6 865"/>
  <circle cx="1289.6" cy="861.6" r="2.4"/>
  <path d="M1284.4 869.2 Q1285.2 864.6 1289.6 864.6 Q1294 864.6 1294.8 869.2"/>
  <path d="M1323.6 866.2 Q1325 864.8 1325 860 Q1325 854.6 1330 854.2 M1336.3 861.6 Q1336.4 864.8 1337 866.2 Z M1323.6 866.2 H1337"/>
</g>
<circle cx="1334.2" cy="856" r="2.9" fill="#1f1f1f"/>
<path d="M184.1 859.9 H189.5 L186.8 862.7 Z M172 862.6 H177 L174.6 859.8 Z" fill="#3b3b3b"/>
<path d="M1328.2 867.6 Q1330 869.6 1331.8 867.6 Z" fill="#3b3b3b" stroke="#3b3b3b" stroke-width="1"/>
<path d="M289.9 865.6 V866.2" stroke="#3b3b3b" stroke-width="1.2"/>

</svg>
<svg id="menu" width="1358" height="874" viewBox="0 0 1358 874" font-family='"Liberation Sans", sans-serif'>
<defs>
  <filter id="msh" x="-20%" y="-20%" width="140%" height="140%">
    <feGaussianBlur in="SourceAlpha" stdDeviation="6"/>
    <feOffset dx="0" dy="4" result="b"/>
    <feComponentTransfer><feFuncA type="linear" slope="0.17"/></feComponentTransfer>
    <feMerge><feMergeNode/><feMergeNode in="SourceGraphic"/></feMerge>
  </filter>
</defs>
<!-- ===== menu ===== -->
<g filter="url(#msh)">
  <rect x="391" y="34.1" width="252" height="550.1" rx="7" fill="#ffffff"/>
</g>
<rect x="391" y="76.9" width="252" height="1" fill="#d4d4d4"/>
<rect x="391" y="122.9" width="252" height="1" fill="#d4d4d4"/>
<rect x="391" y="299" width="252" height="1" fill="#d4d4d4"/>
<rect x="391" y="539.8" width="252" height="1" fill="#d4d4d4"/>
<text transform="translate(428.60 60.00) scale(0.9797 1)" font-family='"Liberation Sans", sans-serif' font-size="16.6" fill="#616161" font-weight="normal" font-style="normal">Views</text>
<text transform="translate(428.60 106.00) scale(0.9808 1)" font-family='"Liberation Sans", sans-serif' font-size="16.6" fill="#616161" font-weight="normal" font-style="normal">View &amp; Sort</text>
<text transform="translate(427.28 151.80) scale(0.9915 1)" font-family='"Liberation Sans", sans-serif' font-size="16.6" fill="#616161" font-weight="normal" font-style="normal">Pull</text>
<text transform="translate(427.28 184.10) scale(0.9915 1)" font-family='"Liberation Sans", sans-serif' font-size="16.6" fill="#616161" font-weight="normal" font-style="normal">Push</text>
<text transform="translate(427.78 216.60) scale(0.9915 1)" font-family='"Liberation Sans", sans-serif' font-size="16.6" fill="#616161" font-weight="normal" font-style="normal">Clone</text>
<text transform="translate(427.77 249.20) scale(0.9977 1)" font-family='"Liberation Sans", sans-serif' font-size="16.6" fill="#616161" font-weight="normal" font-style="normal">Checkout to...</text>
<text transform="translate(427.28 281.90) scale(0.9915 1)" font-family='"Liberation Sans", sans-serif' font-size="16.6" fill="#616161" font-weight="normal" font-style="normal">Fetch</text>
<text transform="translate(427.78 328.30) scale(0.9915 1)" font-family='"Liberation Sans", sans-serif' font-size="16.6" fill="#616161" font-weight="normal" font-style="normal">Commit</text>
<text transform="translate(427.78 360.20) scale(0.9915 1)" font-family='"Liberation Sans", sans-serif' font-size="16.6" fill="#616161" font-weight="normal" font-style="normal">Changes</text>
<text transform="translate(427.28 392.80) scale(0.9915 1)" font-family='"Liberation Sans", sans-serif' font-size="16.6" fill="#616161" font-weight="normal" font-style="normal">Pull, Push</text>
<text transform="translate(427.28 424.70) scale(0.9915 1)" font-family='"Liberation Sans", sans-serif' font-size="16.6" fill="#616161" font-weight="normal" font-style="normal">Branch</text>
<text transform="translate(427.28 458.40) scale(0.9915 1)" font-family='"Liberation Sans", sans-serif' font-size="16.6" fill="#616161" font-weight="normal" font-style="normal">Remote</text>
<text transform="translate(427.94 489.90) scale(0.9915 1)" font-family='"Liberation Sans", sans-serif' font-size="16.6" fill="#616161" font-weight="normal" font-style="normal">Stash</text>
<text transform="translate(428.27 523.00) scale(0.9915 1)" font-family='"Liberation Sans", sans-serif' font-size="16.6" fill="#616161" font-weight="normal" font-style="normal">Tags</text>
<text transform="translate(427.93 568.80) scale(1.0077 1)" font-family='"Liberation Sans", sans-serif' font-size="16.6" fill="#616161" font-weight="normal" font-style="normal">Show Git Output</text>
<g fill="none" stroke="#616161" stroke-width="1.3">
  <path d="M614.6 48.2 L621.2 54.6 L614.6 61"/>
  <path d="M614.6 94.2 L621.2 100.6 L614.6 107"/>
  <path d="M614.6 316.5 L621.2 322.9 L614.6 329.3"/>
  <path d="M614.6 348.4 L621.2 354.8 L614.6 361.2"/>
  <path d="M614.6 381 L621.2 387.4 L614.6 393.8"/>
  <path d="M614.6 412.9 L621.2 419.3 L614.6 425.7"/>
  <path d="M614.6 446.2 L621.2 452.6 L614.6 459"/>
  <path d="M614.6 478.1 L621.2 484.5 L614.6 490.9"/>
  <path d="M614.6 510.6 L621.2 517 L614.6 523.4"/>
</g>
</svg>
</body></html>
